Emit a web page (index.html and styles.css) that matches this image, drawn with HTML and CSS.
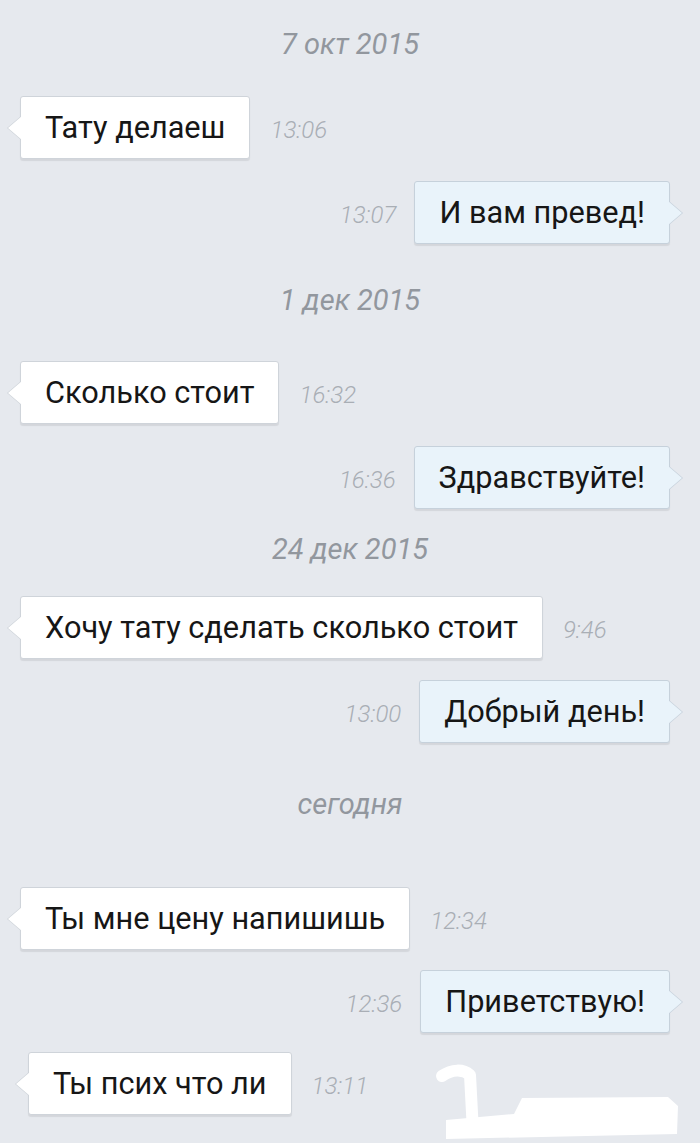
FILE: index.html
```html
<!DOCTYPE html>
<html lang="ru">
<head>
    <meta charset="UTF-8">
    <meta name="viewport" content="width=device-width, initial-scale=1.0">
    <title>Сообщения</title>
    <link rel="stylesheet" href="styles.css">
</head>
<body>

    <div class="chat">

        <!-- 7 окт -->
        <div class="date">7 окт 2015</div>

        <div class="row in sp-32">
            <div class="bubble">Тату делаеш</div>
            <span class="time">13:06</span>
        </div>

        <div class="row out sp-22">
            <span class="time">13:07</span>
            <div class="bubble">И вам превед!</div>
        </div>

        <!-- 1 дек -->
        <div class="date sp-36">1 дек 2015</div>

        <div class="row in sp-41">
            <div class="bubble">Сколько стоит</div>
            <span class="time">16:32</span>
        </div>

        <div class="row out sp-22">
            <span class="time">16:36</span>
            <div class="bubble">Здравствуйте!</div>
        </div>

        <!-- 24 дек -->
        <div class="date sp-20">24 дек 2015</div>

        <div class="row in sp-27">
            <div class="bubble">Хочу тату сделать сколько стоит</div>
            <span class="time">9:46</span>
        </div>

        <div class="row out sp-21">
            <span class="time">13:00</span>
            <div class="bubble">Добрый день!</div>
        </div>

        <!-- сегодня -->
        <div class="date sp-41">сегодня</div>

        <div class="row in sp-63">
            <div class="bubble">Ты мне цену напишишь</div>
            <span class="time">12:34</span>
        </div>

        <div class="row out sp-20">
            <span class="time">12:36</span>
            <div class="bubble">Приветствую!</div>
        </div>

        <div class="row in last sp-19">
            <div class="bubble">Ты псих что ли</div>
            <span class="time">13:11</span>
            <!-- замазано -->
            <svg class="blot" width="260" height="82" viewBox="0 0 260 82">
                <path d="M12 16 C22 9 33 9 40 15 L43 72" fill="none" stroke="#fff" stroke-width="12" stroke-linecap="round" stroke-linejoin="round"/>
                <path d="M16 60 L84 54 L92 38 L238 37 L248 46 L247 74 L16 79 Z" fill="#fff"/>
            </svg>
        </div>

    </div>

</body>
</html>
```

FILE: styles.css
```css
/* Общее */
body {
    margin: 0;
    padding: 0;
    background-color: #e6e9ee;
    font-family: Roboto, "Noto Sans", sans-serif;
}

.chat {
    padding: 24px 0 40px;
}

/* Дата */
.date {
    height: 40px;
    line-height: 40px;
    text-align: center;
    font-size: 29px;
    font-style: italic;
    color: #92979e;
}

/* Строка сообщения */
.row {
    display: flex;
    align-items: center;
}

.row.in {
    padding-left: 20px;
}

.row.out {
    justify-content: flex-end;
    padding-right: 30px;
}

.row.last {
    position: relative;
    padding-left: 28px;
}

.sp-19 { margin-top: 19px; }
.sp-20 { margin-top: 20px; }
.sp-21 { margin-top: 21px; }
.sp-22 { margin-top: 22px; }
.sp-27 { margin-top: 27px; }
.sp-32 { margin-top: 32px; }
.sp-36 { margin-top: 36px; }
.sp-41 { margin-top: 41px; }
.sp-63 { margin-top: 63px; }

/* Пузырь */
.bubble {
    position: relative;
    box-sizing: border-box;
    height: 63px;
    padding: 0 24px;
    display: flex;
    align-items: center;
    font-size: 30.7px;
    color: #161616;
    border: 1px solid #cfd4da;
    border-radius: 3px;
    box-shadow: 0 2px 1px rgba(0, 0, 0, 0.08);
    white-space: nowrap;
}

.in .bubble {
    background-color: #fff;
}

.out .bubble {
    background-color: #e9f3fa;
    border-color: #c6d1db;
}

.bubble::before,
.bubble::after {
    content: "";
    position: absolute;
    top: 50%;
    margin-top: -12px;
    border: 12px solid transparent;
}

.in .bubble::before {
    left: -14px;
    border-left: 0;
    border-right: 14px solid #cfd4da;
}

.in .bubble::after {
    left: -13px;
    border-left: 0;
    border-right: 14px solid #fff;
}

.out .bubble::before {
    right: -14px;
    border-right: 0;
    border-left: 14px solid #c6d1db;
}

.out .bubble::after {
    right: -13px;
    border-right: 0;
    border-left: 14px solid #e9f3fa;
}

/* Время */
.time {
    padding-top: 5px;
    font-size: 24px;
    font-style: italic;
    font-weight: 300;
    color: #a9aeb5;
}

.in .time {
    margin-left: 20px;
}

.out .time {
    margin-right: 18px;
}

.blot {
    position: absolute;
    left: 430px;
    top: 8px;
}
```
